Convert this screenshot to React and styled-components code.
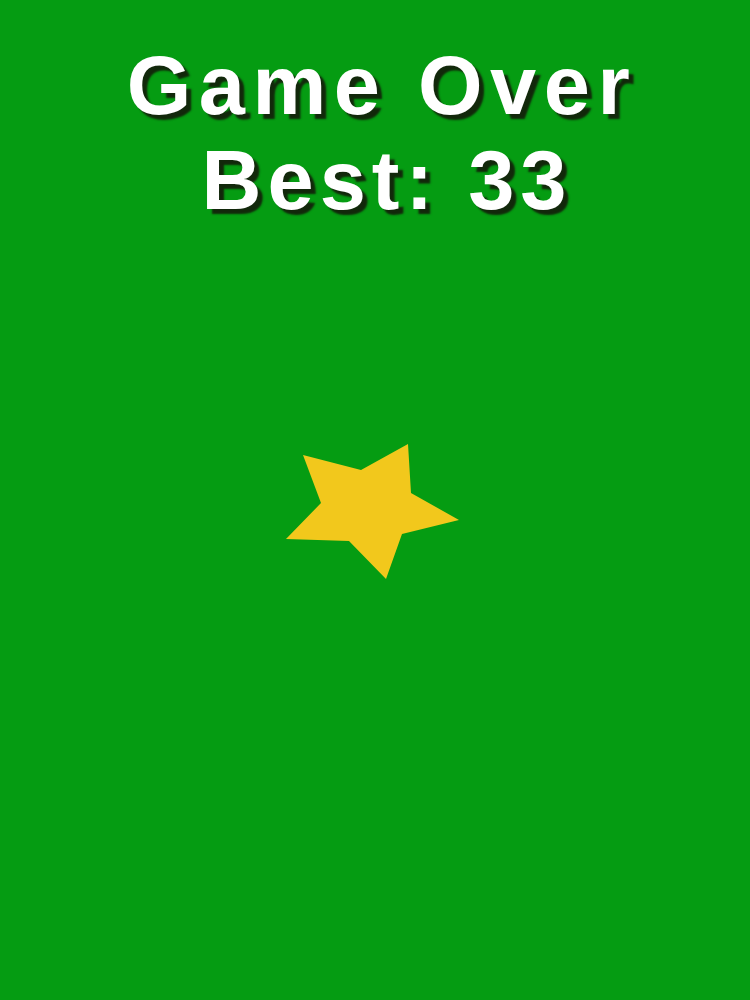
import React from 'react';
import styled, { createGlobalStyle } from 'styled-components';

const GlobalStyle = createGlobalStyle`
  html, body {
    margin: 0;
    padding: 0;
    background: #059c12;
  }
`;

const Screen = styled.div`
  width: 750px;
  height: 1000px;
  background-color: #059c12;
  display: flex;
  flex-direction: column;
  align-items: center;
  overflow: hidden;
`;

const Title = styled.div`
  margin-top: 38px;
  padding-left: 14px;
  display: flex;
  flex-direction: column;
  align-items: center;
  font-family: 'Liberation Sans', Arial, sans-serif;
  font-weight: bold;
  font-size: 83px;
  line-height: 95px;
  color: #ffffff;
  text-shadow: 5px 5px 2px #12280b;
`;

const Line = styled.div`
  white-space: nowrap;
  letter-spacing: ${(p) => p.$spacing}px;
  padding-left: ${(p) => p.$shift || 0}px;
`;

const StarArea = styled.div`
  margin-top: 213px;
  margin-right: 4px;
  width: 180px;
  height: 145px;
`;

const Star = () => (
  <svg width="180" height="145" viewBox="284 440 180 145">
    <polygon
      points="304,454 362,469 409,443 412,492 460,519 403,533 387,578 350,540 287,538 322,502"
      fill="#f2c81c"
    />
  </svg>
);

const App = () => (
  <Screen>
    <GlobalStyle />
    <Title>
      <Line $spacing={7.5}>Game Over</Line>
      <Line $spacing={6} $shift={10}>Best: 33</Line>
    </Title>
    <StarArea>
      <Star />
    </StarArea>
  </Screen>
);

export default App;
